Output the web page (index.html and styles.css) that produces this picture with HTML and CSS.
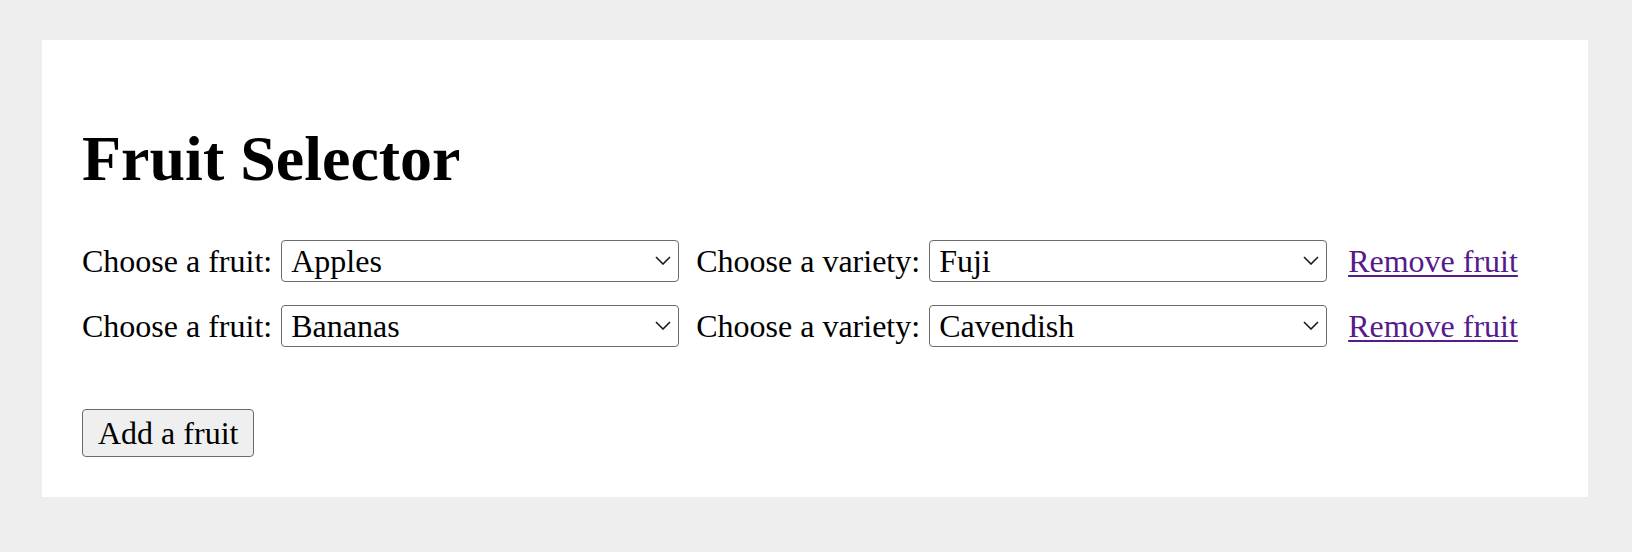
FILE: index.html
```html
<!DOCTYPE html>
<html lang="en">
<head>
<meta charset="utf-8">
<title>Fruit Selector</title>
<link rel="stylesheet" href="styles.css">
</head>
<body>
<main class="card">
  <h1 class="title">Fruit Selector</h1>
  <div class="rows">
    <div class="row">
      <label class="label">Choose a fruit:</label>
      <span class="select-wrap">
        <select class="select"><option>Apples</option><option>Bananas</option></select>
        <svg class="chev" width="16" height="9" viewBox="0 0 16 9"><path d="M1 1 L8 8 L15 1" fill="none" stroke="#1a1a1a" stroke-width="1.6"/></svg>
      </span>
      <label class="label label-variety">Choose a variety:</label>
      <span class="select-wrap">
        <select class="select"><option>Fuji</option><option>Gala</option></select>
        <svg class="chev" width="16" height="9" viewBox="0 0 16 9"><path d="M1 1 L8 8 L15 1" fill="none" stroke="#1a1a1a" stroke-width="1.6"/></svg>
      </span>
      <a class="remove" href="#">Remove fruit</a>
    </div>
    <div class="row">
      <label class="label">Choose a fruit:</label>
      <span class="select-wrap">
        <select class="select"><option>Bananas</option><option>Apples</option></select>
        <svg class="chev" width="16" height="9" viewBox="0 0 16 9"><path d="M1 1 L8 8 L15 1" fill="none" stroke="#1a1a1a" stroke-width="1.6"/></svg>
      </span>
      <label class="label label-variety">Choose a variety:</label>
      <span class="select-wrap">
        <select class="select"><option>Cavendish</option><option>Plantain</option></select>
        <svg class="chev" width="16" height="9" viewBox="0 0 16 9"><path d="M1 1 L8 8 L15 1" fill="none" stroke="#1a1a1a" stroke-width="1.6"/></svg>
      </span>
      <a class="remove" href="#">Remove fruit</a>
    </div>
  </div>
  <button class="add" type="button">Add a fruit</button>
</main>
</body>
</html>
```
FILE: styles.css
```css
html, body {
  margin: 0;
  padding: 0;
}
body {
  background: #eeeeee;
  padding: 40px 44px 40px 42px;
  font-family: "Liberation Serif", "Times New Roman", serif;
  font-size: 32px;
  color: #000;
}
.card {
  background: #ffffff;
  padding: 40px;
  display: flex;
  flex-direction: column;
  align-items: flex-start;
}
.title {
  font-size: 64px;
  font-weight: 700;
  line-height: 74px;
  margin: 42px 0 44px 0;
}
.rows {
  display: flex;
  flex-direction: column;
  gap: 23px;
}
.row {
  display: flex;
  align-items: center;
  height: 42px;
}
.label {
  line-height: 37px;
}
.label-variety {
  margin-left: 17px;
}
.select-wrap {
  position: relative;
  margin-left: 9px;
  display: block;
}
.select {
  appearance: none;
  -webkit-appearance: none;
  display: block;
  width: 398px;
  height: 42px;
  box-sizing: border-box;
  border: 1px solid #6b6b6b;
  border-radius: 4px;
  background: #ffffff;
  font-family: "Liberation Serif", "Times New Roman", serif;
  font-size: 32px;
  color: #000;
  padding: 0 34px 0 9px;
  margin: 0;
}
.chev {
  position: absolute;
  right: 8px;
  top: 16px;
  pointer-events: none;
}
.remove {
  margin-left: 21px;
  color: #551a8b;
  text-decoration: underline;
  text-decoration-thickness: 2px;
  text-underline-offset: 3px;
  line-height: 37px;
}
.add {
  margin-top: 62px;
  height: 48px;
  box-sizing: border-box;
  padding: 0 15px 0 15px;
  background: #efefef;
  border: 1px solid #6b6b6b;
  border-radius: 4px;
  font-family: "Liberation Serif", "Times New Roman", serif;
  font-size: 32px;
  color: #000;
}
```
